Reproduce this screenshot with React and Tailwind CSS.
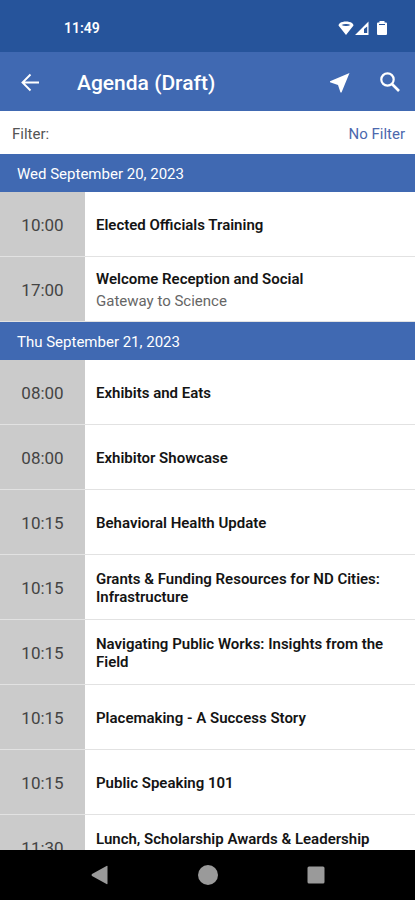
import React from "react";

const days = [
  {
    date: "Wed September 20, 2023",
    sessions: [
      { time: "10:00", title: "Elected Officials Training" },
      { time: "17:00", title: "Welcome Reception and Social", place: "Gateway to Science" },
    ],
  },
  {
    date: "Thu September 21, 2023",
    sessions: [
      { time: "08:00", title: "Exhibits and Eats" },
      { time: "08:00", title: "Exhibitor Showcase" },
      { time: "10:15", title: "Behavioral Health Update" },
      { time: "10:15", title: "Grants & Funding Resources for ND Cities: Infrastructure" },
      { time: "10:15", title: "Navigating Public Works: Insights from the Field" },
      { time: "10:15", title: "Placemaking - A Success Story" },
      { time: "10:15", title: "Public Speaking 101" },
      { time: "11:30", title: "Lunch, Scholarship Awards & Leadership Speaker" },
    ],
  },
];

const StatusBar = () => (
  <div className="h-[52px] shrink-0 bg-[#26549b] text-white flex items-center justify-between pl-16 pr-[25px] pt-1">
    <span className="text-sm font-semibold">11:49</span>
    <div className="flex items-center">
      <svg className="w-4 h-4" viewBox="0 0 16 16" fill="currentColor">
        <path fillRule="evenodd" d="M8 15 0.500 5.500Q0.500 4 2 3C5 1 11 1 14 3Q15.500 4 15.500 5.500ZM3.500 5C6 6.200 10 6.200 12.500 5 10 3.600 6 3.600 3.500 5Z" />
      </svg>
      <svg className="w-4 h-4" viewBox="0 0 16 16" fill="currentColor">
        <path fillRule="evenodd" d="M14.500 1.500V15H1ZM13.200 6.500 10 9V13H13.200Z" />
      </svg>
      <svg className="w-4 h-4 ml-1" viewBox="0 0 16 16" fill="currentColor">
        <path fillRule="evenodd" d="M5.500 1h5v1.500H12q1 0 1 1V14q0 1-1 1H4q-1 0-1-1V3.500q0-1 1-1h1.500ZM5 4v1h6V4Z" />
      </svg>
    </div>
  </div>
);

const AppBar = () => (
  <header className="h-[59px] shrink-0 bg-[#4069b2] text-white flex items-center pl-[18px] pr-[13px]">
    <button type="button" aria-label="Back" className="w-6 h-6">
      <svg className="w-6 h-6" viewBox="0 0 24 24" fill="none" stroke="currentColor" strokeWidth="1.900">
        <path d="M21 12.500H5M12.500 4.500 4.500 12.500l8 8" />
      </svg>
    </button>
    <h1 className="flex-1 ml-[35px] pt-1 text-[21px] font-medium">Agenda (Draft)</h1>
    <button type="button" aria-label="Locate" className="w-6 h-6">
      <svg className="w-6 h-6" viewBox="0 0 24 24" fill="currentColor">
        <path d="M21.500 3 2 11.300v1l8 2.700L12.500 22.500h1Z" />
      </svg>
    </button>
    <button type="button" aria-label="Search" className="w-6 h-6 ml-[26px]">
      <svg className="w-6 h-6" viewBox="0 0 24 24" fill="none" stroke="currentColor" strokeWidth="2.200">
        <circle cx="9.500" cy="9.500" r="6.200" />
        <path d="m14 14 7 7" strokeWidth="2.600" />
      </svg>
    </button>
  </header>
);

const SessionRow = ({ session }) => (
  <li className="flex h-[65px] border-b border-[#e2e2e2]">
    <time className="w-[85px] shrink-0 bg-[#cbcbcb] flex items-center justify-center pt-1 text-[17px] text-[#444444]">
      {session.time}
    </time>
    <div className="flex-1 flex flex-col justify-center gap-1 pl-[11px] pr-5 pt-0.5">
      <h3 className="text-[15px] leading-[18px] font-semibold text-[#141414]">{session.title}</h3>
      {session.place && <p className="text-[15px] leading-[18px] text-[#666666]">{session.place}</p>}
    </div>
  </li>
);

const App = () => {
  return (
    <div className="h-screen flex flex-col bg-white font-[Roboto,sans-serif]">
      <StatusBar />
      <AppBar />
      <div className="h-[43px] shrink-0 flex items-center justify-between pl-3 pr-[10px] pt-1 text-[15px]">
        <span className="text-[#555555]">Filter:</span>
        <button type="button" className="text-[#4c68ae]">No Filter</button>
      </div>
      <main className="flex-1 min-h-0 overflow-hidden">
        {days.map((day) => (
          <section key={day.date}>
            <h2 className="h-[38px] flex items-center bg-[#4069b2] pl-[17px] pt-0.5 text-[15px] text-white">
              {day.date}
            </h2>
            <ul>
              {day.sessions.map((session) => (
                <SessionRow key={session.title} session={session} />
              ))}
            </ul>
          </section>
        ))}
      </main>
      <nav className="h-[50px] shrink-0 bg-black text-[#9a9a9a] flex items-center justify-center gap-[84px]">
        <button type="button" aria-label="Back" className="w-6 h-6">
          <svg className="w-6 h-6" viewBox="0 0 24 24" fill="currentColor">
            <path d="M19.500 3.500v17q0 1-1 .500L4 13q-1-1 0-2L18.500 3q1-.500 1 .500Z" />
          </svg>
        </button>
        <button type="button" aria-label="Home" className="w-6 h-6">
          <svg className="w-6 h-6" viewBox="0 0 24 24" fill="currentColor">
            <circle cx="12" cy="12" r="10" />
          </svg>
        </button>
        <button type="button" aria-label="Recent apps" className="w-6 h-6">
          <svg className="w-6 h-6" viewBox="0 0 24 24" fill="currentColor">
            <rect x="3.500" y="3.500" width="17" height="17" rx="1.500" />
          </svg>
        </button>
      </nav>
    </div>
  );
};

export default App;
